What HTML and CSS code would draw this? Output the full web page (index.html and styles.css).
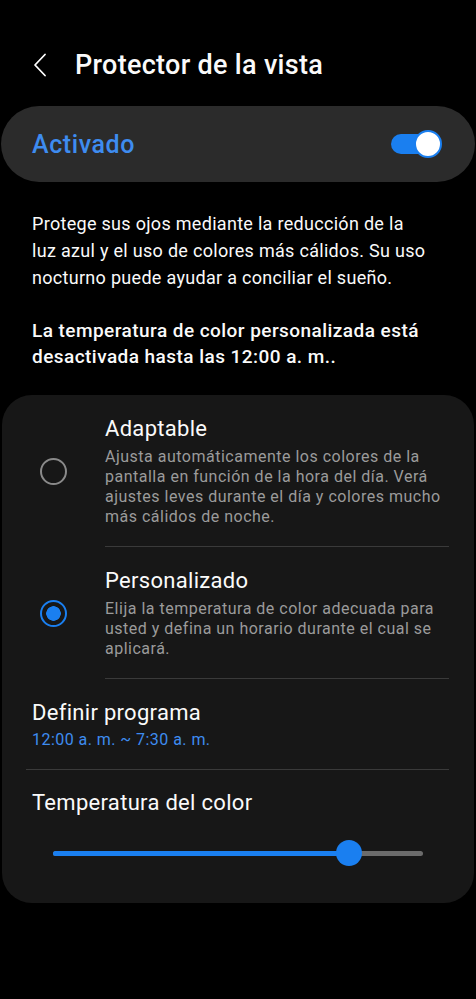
FILE: index.html
```html
<html lang="es">
<head>
    <meta charset="UTF-8">
    <meta name="viewport" content="width=device-width, initial-scale=1.0">
    <title>Protector de la vista</title>
    <link rel="stylesheet" href="styles.css">
</head>
<body>
    <div class="header">
        <svg class="back" width="16" height="24" viewBox="0 0 16 24">
            <path d="M13 1.5 L3 12 L13 22.5" fill="none" stroke="#fff" stroke-width="1.8" stroke-linecap="round" stroke-linejoin="round"/>
        </svg>
        <h1>Protector de la vista</h1>
    </div>

    <div class="master">
        <span class="master-label">Activado</span>
        <span class="switch"><span class="knob"></span></span>
    </div>

    <p class="desc">Protege sus ojos mediante la reducción de la luz azul y el uso de colores más cálidos. Su uso nocturno puede ayudar a conciliar el sueño.</p>
    <p class="notice">La temperatura de color personalizada está desactivada hasta las 12:00 a. m..</p>

    <div class="panel">
        <div class="option">
            <span class="radio"></span>
            <div class="option-body">
                <div class="option-title">Adaptable</div>
                <div class="option-text">Ajusta automáticamente los colores de la pantalla en función de la hora del día. Verá ajustes leves durante el día y colores mucho más cálidos de noche.</div>
            </div>
        </div>
        <div class="option selected">
            <span class="radio"></span>
            <div class="option-body">
                <div class="option-title">Personalizado</div>
                <div class="option-text">Elija la temperatura de color adecuada para usted y defina un horario durante el cual se aplicará.</div>
            </div>
        </div>
        <div class="row">
            <div class="row-title">Definir programa</div>
            <div class="row-sub">12:00 a. m. ~ 7:30 a. m.</div>
        </div>
        <div class="row last">
            <div class="row-title">Temperatura del color</div>
            <div class="slider">
                <div class="track">
                    <div class="fill" style="width: 80%"></div>
                </div>
                <span class="thumb" style="left: 80%"></span>
            </div>
        </div>
    </div>
</body>
</html>
```

FILE: styles.css
```css
body {
    margin: 0;
    background-color: #000;
    color: #fafafa;
    font-family: Roboto, "Noto Sans", sans-serif;
}
.header {
    display: flex;
    align-items: center;
    height: 40px;
    padding: 45px 0 21px 32px;
}
.back {
    margin-right: 27px;
}
h1 {
    margin: 0;
    font-size: 27px;
    font-weight: 500;
    letter-spacing: 0.3px;
}
.master {
    display: flex;
    align-items: center;
    justify-content: space-between;
    height: 76px;
    margin: 0 1px;
    padding: 0 36px 0 31px;
    background-color: #2b2b2b;
    border-radius: 38px;
}
.master-label {
    color: #3e8cf0;
    font-size: 25px;
    font-weight: 500;
    letter-spacing: 0.6px;
}
.switch {
    position: relative;
    width: 48px;
    height: 20px;
    background-color: #1a7ff0;
    border-radius: 10px;
}
.knob {
    position: absolute;
    right: -3px;
    top: -4px;
    width: 24px;
    height: 24px;
    background-color: #fff;
    border: 2px solid #1a7ff0;
    border-radius: 50%;
}
.desc, .notice {
    margin: 0;
    padding: 0 50px 0 32px;
    font-size: 18px;
    line-height: 27px;
    letter-spacing: 0.3px;
}
.desc {
    margin-top: 28px;
}
.notice {
    margin-top: 27px;
    padding-right: 40px;
    font-size: 19px;
    font-weight: 500;
    line-height: 26px;
    letter-spacing: 0.45px;
}
.panel {
    margin: 25px 2px 0;
    background-color: #171717;
    border-radius: 30px;
}
.option {
    display: flex;
    align-items: center;
}
.radio {
    flex: none;
    width: 23px;
    height: 23px;
    margin: 0 38px 0 38px;
    border: 2px solid #8a8a8a;
    border-radius: 50%;
    box-sizing: content-box;
}
.selected .radio {
    width: 21px;
    height: 21px;
    border: 2px solid #1a7ff0;
    background: radial-gradient(circle, #1a7ff0 0 7px, transparent 7.5px);
    padding: 1px;
}
.option-body {
    flex: 1;
    margin-right: 25px;
    padding: 20px 0 19px;
    border-bottom: 1px solid #3a3a3a;
}
.option-title {
    font-size: 22px;
    line-height: 28px;
    letter-spacing: 0.3px;
}
.option-text {
    margin-top: 4px;
    color: #9b9b9b;
    font-size: 16px;
    line-height: 20px;
    letter-spacing: 0.5px;
}
.row {
    margin: 0 25px 0 24px;
    padding: 20px 6px 18px;
    border-bottom: 1px solid #3a3a3a;
}
.row.last {
    border-bottom: none;
    padding-top: 19px;
    padding-bottom: 37px;
}
.row-title {
    font-size: 22px;
    line-height: 28px;
    letter-spacing: 0.3px;
}
.row-sub {
    margin-top: 2px;
    color: #3e8cf0;
    font-size: 16px;
    line-height: 22px;
    letter-spacing: 0.45px;
}
.slider {
    position: relative;
    margin: 23px 0 0 21px;
    width: 370px;
    height: 26px;
}
.track {
    position: absolute;
    left: 0;
    right: 0;
    top: 11px;
    height: 5px;
    background-color: #6b6b6b;
    border-radius: 3px;
}
.fill {
    height: 100%;
    background-color: #1a7ff0;
    border-radius: 3px;
}
.thumb {
    position: absolute;
    top: 0;
    width: 26px;
    height: 26px;
    margin-left: -13px;
    background-color: #1a7ff0;
    border-radius: 50%;
}
```
